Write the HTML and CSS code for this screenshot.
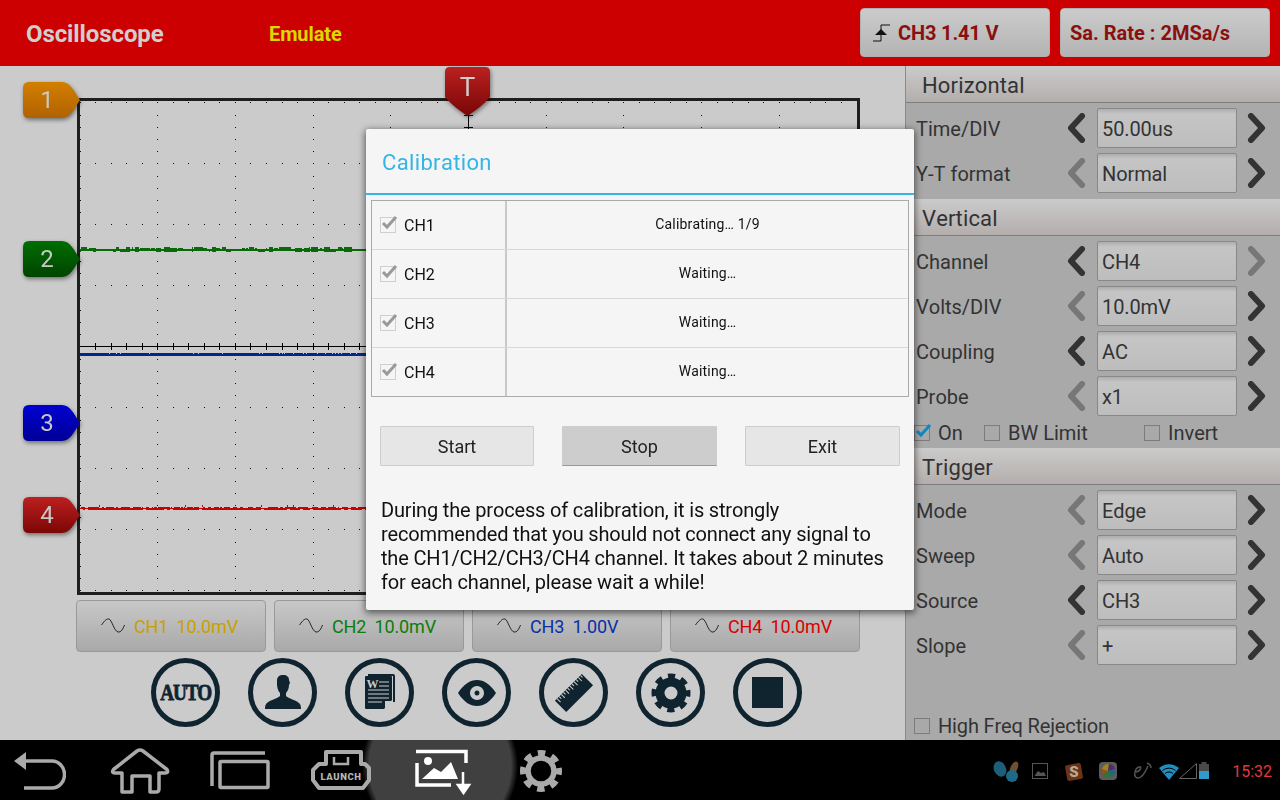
FILE: index.html
```html
<!DOCTYPE html>
<html lang="en">
<head>
<meta charset="utf-8">
<title>Oscilloscope</title>
<link rel="stylesheet" href="styles.css">
</head>
<body>
<div class="app">
  <header class="topbar">
    <div class="app-title">Oscilloscope</div>
    <div class="mode">Emulate</div>
    <div class="top-btn top-btn-trigger">
      <svg class="trig-icon" width="18" height="18" viewBox="0 0 18 18"><path d="M17 1H8V17H0" fill="none" stroke="#111" stroke-width="1"/><path d="M8 5L14 11H2Z" fill="#111"/></svg>
      <span>CH3 1.41 V</span>
    </div>
    <div class="top-btn top-btn-rate"><span>Sa. Rate : 2MSa/s</span></div>
  </header>

  <main class="main">
    <section class="left">
      <div class="scope"><canvas id="scope" class="scope-canvas" width="777" height="491"></canvas></div>

      <div class="marker m1"><div class="marker-body">1</div></div>
      <div class="marker m2"><div class="marker-body">2</div></div>
      <div class="marker m3"><div class="marker-body">3</div></div>
      <div class="marker m4"><div class="marker-body">4</div></div>
      <div class="t-marker"><div class="t-body">T</div></div>

      <div class="ch-row">
        <div class="ch-btn"><svg class="sine" width="24" height="15" viewBox="0 0 24 15"><path d="M0.5 7C4 2 6 0.5 8 1C11 2 13 13 17 14C20 14.5 22 11 23.5 7" fill="none" stroke="#222" stroke-width="1"/></svg><span class="ch1">CH1</span><span class="ch1 ch-val">10.0mV</span></div>
        <div class="ch-btn"><svg class="sine" width="24" height="15" viewBox="0 0 24 15"><path d="M0.5 7C4 2 6 0.5 8 1C11 2 13 13 17 14C20 14.5 22 11 23.5 7" fill="none" stroke="#222" stroke-width="1"/></svg><span class="ch2">CH2</span><span class="ch2 ch-val">10.0mV</span></div>
        <div class="ch-btn"><svg class="sine" width="24" height="15" viewBox="0 0 24 15"><path d="M0.5 7C4 2 6 0.5 8 1C11 2 13 13 17 14C20 14.5 22 11 23.5 7" fill="none" stroke="#222" stroke-width="1"/></svg><span class="ch3">CH3</span><span class="ch3 ch-val">1.00V</span></div>
        <div class="ch-btn"><svg class="sine" width="24" height="15" viewBox="0 0 24 15"><path d="M0.5 7C4 2 6 0.5 8 1C11 2 13 13 17 14C20 14.5 22 11 23.5 7" fill="none" stroke="#222" stroke-width="1"/></svg><span class="ch4">CH4</span><span class="ch4 ch-val">10.0mV</span></div>
      </div>

      <div class="round-row">
        <div class="round"><span class="auto">AUTO</span></div>
        <div class="round">
          <svg width="40" height="40" viewBox="0 0 40 40"><path fill="#102430" d="M14 8C14 3 17 2 20 2C24 2 26 4 26 7L27 10L26 12C26 16 24.500 18 23 20V23C26 26 34 27 37 31C38 33 38 35 38 36H2C2 35 2 33 3 31C6 27 14 26 17 23V20C15 18 14 14 14 11Z"/></svg>
        </div>
        <div class="round">
          <svg width="32" height="38" viewBox="0 0 32 38"><path fill="#102430" d="M4 0H29Q31 0 31 2V28H29V2H4Z"/><path fill="#102430" d="M1 3Q1 2 2 2H27Q28 2 28 3V26L20 35H2Q1 35 1 34Z"/><path fill="#cbcbcb" d="M21 35L28 27H21Z"/><path stroke="#cbcbcb" stroke-width="1.2" d="M15 8H25M15 12H25M4 16H25M4 20H25M4 24H25M4 28H18"/><text x="2.500" y="14" class="doc-w">W</text></svg>
        </div>
        <div class="round">
          <svg width="40" height="28" viewBox="0 0 40 28"><path fill="#102430" fill-rule="evenodd" d="M1 14C7 5 13 1 20 1C27 1 33 5 39 14C33 23 27 27 20 27C13 27 7 23 1 14ZM20 7A7 7 0 1 0 20.010 7ZM20 11.500A2.500 2.500 0 1 1 19.990 11.500Z"/></svg>
        </div>
        <div class="round">
          <svg width="40" height="40" viewBox="0 0 40 40"><g transform="rotate(-45 20 20)"><rect x="1" y="12" width="38" height="16" fill="#102430"/><path stroke="#cbcbcb" stroke-width="1" d="M4 12v5M7 12v3M10 12v5M13 12v3M16 12v5M19 12v3M22 12v5M25 12v3M28 12v5M31 12v3M34 12v5M37 12v3"/></g></svg>
        </div>
        <div class="round">
          <svg width="40" height="40" viewBox="0 0 40 40"><circle cx="20" cy="20" r="11" fill="none" stroke="#102430" stroke-width="9"/><circle cx="20" cy="20" r="16.500" fill="none" stroke="#102430" stroke-width="6" stroke-dasharray="7 5.960" stroke-dashoffset="3.500"/></svg>
        </div>
        <div class="round"><div class="stop-square"></div></div>
      </div>
    </section>

    <aside class="panel">
      <div class="head">Horizontal</div>
      <div class="rows">
        <div class="row"><span class="label">Time/DIV</span><svg class="chev" viewBox="0 0 19 30"><polyline points="15,3 4,15 15,27"/></svg><div class="box">50.00us</div><svg class="chev chev-r" viewBox="0 0 19 30"><polyline points="4,3 15,15 4,27"/></svg></div>
        <div class="row"><span class="label">Y-T format</span><svg class="chev off" viewBox="0 0 19 30"><polyline points="15,3 4,15 15,27"/></svg><div class="box">Normal</div><svg class="chev chev-r" viewBox="0 0 19 30"><polyline points="4,3 15,15 4,27"/></svg></div>
      </div>
      <div class="head">Vertical</div>
      <div class="rows rows-tight">
        <div class="row"><span class="label">Channel</span><svg class="chev" viewBox="0 0 19 30"><polyline points="15,3 4,15 15,27"/></svg><div class="box">CH4</div><svg class="chev chev-r off" viewBox="0 0 19 30"><polyline points="4,3 15,15 4,27"/></svg></div>
        <div class="row"><span class="label">Volts/DIV</span><svg class="chev off" viewBox="0 0 19 30"><polyline points="15,3 4,15 15,27"/></svg><div class="box">10.0mV</div><svg class="chev chev-r" viewBox="0 0 19 30"><polyline points="4,3 15,15 4,27"/></svg></div>
        <div class="row"><span class="label">Coupling</span><svg class="chev" viewBox="0 0 19 30"><polyline points="15,3 4,15 15,27"/></svg><div class="box">AC</div><svg class="chev chev-r" viewBox="0 0 19 30"><polyline points="4,3 15,15 4,27"/></svg></div>
        <div class="row"><span class="label">Probe</span><svg class="chev off" viewBox="0 0 19 30"><polyline points="15,3 4,15 15,27"/></svg><div class="box">x1</div><svg class="chev chev-r" viewBox="0 0 19 30"><polyline points="4,3 15,15 4,27"/></svg></div>
      </div>
      <div class="checks">
        <div class="check check-on"><span class="cb"><svg class="cb-mark" width="18" height="16" viewBox="0 0 18 16"><path d="M3 8L7 12L16 2" fill="none" stroke="#0f8ac0" stroke-width="3"/></svg></span><span>On</span></div>
        <div class="check check-bw"><span class="cb"></span><span>BW Limit</span></div>
        <div class="check check-inv"><span class="cb"></span><span>Invert</span></div>
      </div>
      <div class="head">Trigger</div>
      <div class="rows">
        <div class="row"><span class="label">Mode</span><svg class="chev off" viewBox="0 0 19 30"><polyline points="15,3 4,15 15,27"/></svg><div class="box">Edge</div><svg class="chev chev-r" viewBox="0 0 19 30"><polyline points="4,3 15,15 4,27"/></svg></div>
        <div class="row"><span class="label">Sweep</span><svg class="chev off" viewBox="0 0 19 30"><polyline points="15,3 4,15 15,27"/></svg><div class="box">Auto</div><svg class="chev chev-r" viewBox="0 0 19 30"><polyline points="4,3 15,15 4,27"/></svg></div>
        <div class="row"><span class="label">Source</span><svg class="chev" viewBox="0 0 19 30"><polyline points="15,3 4,15 15,27"/></svg><div class="box">CH3</div><svg class="chev chev-r" viewBox="0 0 19 30"><polyline points="4,3 15,15 4,27"/></svg></div>
        <div class="row"><span class="label">Slope</span><svg class="chev off" viewBox="0 0 19 30"><polyline points="15,3 4,15 15,27"/></svg><div class="box">+</div><svg class="chev chev-r" viewBox="0 0 19 30"><polyline points="4,3 15,15 4,27"/></svg></div>
      </div>
      <div class="check hf"><span class="cb"></span><span>High Freq Rejection</span></div>
    </aside>
  </main>

  <nav class="navbar">
    <div class="spot"></div>
    <svg class="nav-back" width="52" height="38" viewBox="0 0 52 38"><path d="M0 9L12 0V18Z" fill="#aaa"/><path d="M12 9H38A12.500 13.500 0 0 1 38 36H10" fill="none" stroke="#aaa" stroke-width="3.500"/></svg>
    <svg class="nav-home" width="60" height="46" viewBox="0 0 60 46"><path d="M12 44V25H5Q1 25 3.500 21.500L27 3Q30 1 33 3L57 21.500Q59 25 55 25H49V41Q49 44 46 44H40V28H22V44Z" fill="none" stroke="#aaa" stroke-width="3.500" stroke-linejoin="round"/></svg>
    <svg class="nav-recent" width="60" height="40" viewBox="0 0 60 40"><path d="M55 3H4Q2 3 2 5V36" fill="none" stroke="#aaa" stroke-width="3.500"/><rect x="10" y="11.500" width="48" height="26" rx="1" fill="none" stroke="#aaa" stroke-width="3.500"/></svg>
    <svg class="nav-launch" width="60" height="40" viewBox="0 0 60 40"><path d="M15 2H50V14H54L58 18V30L52 38H8L2 30V20L8 14H15Z" fill="none" stroke="#aaa" stroke-width="4" stroke-linejoin="round"/><path d="M23 7V14H37V7" fill="none" stroke="#aaa" stroke-width="2.500"/><text x="30" y="30" text-anchor="middle" class="launch-text">LAUNCH</text></svg>
    <svg class="nav-shot" width="58" height="46" viewBox="0 0 58 46"><path d="M2 14V36H36M1 2.500H51V14" fill="none" stroke="#fff" stroke-width="3.500"/><circle cx="13" cy="12" r="4" fill="#fff"/><path d="M7 30L19 19L26 23L36 13L43 30Z" fill="#fff"/><path d="M48 23V36M43 36H54L48.500 44Z" fill="#fff" stroke="#fff" stroke-width="2.500"/></svg>
    <svg class="nav-gear" width="44" height="46" viewBox="0 0 44 46"><circle cx="22" cy="23" r="13" fill="none" stroke="#aaa" stroke-width="5.500"/><circle cx="22" cy="23" r="18" fill="none" stroke="#aaa" stroke-width="6" stroke-dasharray="7.500 6.640" stroke-dashoffset="3.750"/></svg>
    <div class="tray">
      <svg width="217" height="24" viewBox="0 0 217 24">
        <ellipse cx="7" cy="9" rx="6" ry="8" fill="#1d5f7a" transform="rotate(-25 7 9)"/><ellipse cx="21" cy="8" rx="3.500" ry="7" fill="#6e5230" transform="rotate(25 21 8)"/><circle cx="19" cy="16" r="6" fill="#1d6a88"/>
        <rect x="39.500" y="3.500" width="15" height="15" fill="none" stroke="#555" stroke-width="1"/><path d="M42 15L45 11L48 13L51 12L53 16H42Z" fill="#555"/>
        <rect x="73" y="4" width="16" height="16" rx="2" fill="#6a3418" transform="rotate(-10 81 12)"/><text x="81" y="17" text-anchor="middle" class="tray-s">S</text>
        <rect x="106" y="2" width="18" height="18" rx="4" fill="#5c5c5c"/><path d="M115 11L110 15A7 7 0 0 1 109 9Z" fill="#9a4c1c"/><path d="M115 11L109 9A7 7 0 0 1 116 4Z" fill="#9a861c"/><path d="M115 11L116 4A7 7 0 0 1 122 9Z" fill="#52296c"/><path d="M115 11L122 9A7 7 0 0 1 118 17Z" fill="#246878"/><path d="M115 11L118 17A7 7 0 0 1 110 15Z" fill="#317531"/>
        <path d="M143 12C148 11 149 6 146 7C141 9 140 18 145 18C149 18 152 13 155 6M154 3C157 4 158 6 158 8" fill="none" stroke="#555" stroke-width="1.500"/>
        <path d="M166 8A15 15 0 0 1 186 8L176 20Z" fill="#1f8fbe"/><path d="M169.500 10.500A10 10 0 0 1 182.500 10.500" fill="none" stroke="#000" stroke-width="1"/><path d="M172 13.500A6 6 0 0 1 180 13.500" fill="none" stroke="#000" stroke-width="1"/>
        <path d="M186.500 18.500L203.500 3.500V18.500Z" fill="none" stroke="#666" stroke-width="1"/>
        <rect x="206" y="4" width="10" height="7" fill="#4a4a4a"/><rect x="208.500" y="2" width="5" height="2" fill="#4a4a4a"/><rect x="206" y="11" width="10" height="8" fill="#2f9bc9"/>
      </svg>
      <span class="clock">15:32</span>
    </div>
  </nav>

  <div class="dialog">
    <div class="dlg-title">Calibration</div>
    <div class="cal-table">
      <div class="cal-row"><div class="cal-ch"><span class="cal-cb"><svg width="18" height="16" viewBox="0 0 18 16"><path d="M3 8L7 12L16 2" fill="none" stroke="#999" stroke-width="3"/></svg></span>CH1</div><div class="cal-status">Calibrating… 1/9</div></div>
      <div class="cal-row"><div class="cal-ch"><span class="cal-cb"><svg width="18" height="16" viewBox="0 0 18 16"><path d="M3 8L7 12L16 2" fill="none" stroke="#999" stroke-width="3"/></svg></span>CH2</div><div class="cal-status">Waiting…</div></div>
      <div class="cal-row"><div class="cal-ch"><span class="cal-cb"><svg width="18" height="16" viewBox="0 0 18 16"><path d="M3 8L7 12L16 2" fill="none" stroke="#999" stroke-width="3"/></svg></span>CH3</div><div class="cal-status">Waiting…</div></div>
      <div class="cal-row"><div class="cal-ch"><span class="cal-cb"><svg width="18" height="16" viewBox="0 0 18 16"><path d="M3 8L7 12L16 2" fill="none" stroke="#999" stroke-width="3"/></svg></span>CH4</div><div class="cal-status">Waiting…</div></div>
    </div>
    <div class="dlg-btns">
      <div class="dlg-btn">Start</div>
      <div class="dlg-btn dlg-btn-pressed">Stop</div>
      <div class="dlg-btn">Exit</div>
    </div>
    <p class="dlg-text">During the process of calibration, it is strongly<br>recommended that you should not connect any signal to<br>the CH1/CH2/CH3/CH4 channel. It takes about 2 minutes<br>for each channel, please wait a while!</p>
  </div>
</div>
<script src="script.js"></script>
</body>
</html>
```

FILE: styles.css
```css
* { box-sizing: border-box; }
html, body { margin: 0; padding: 0; }
body { font-family: Roboto, "Liberation Sans", sans-serif; background: #000; font-kerning: none; }
svg { display: block; flex: none; }

.app { position: relative; width: 1280px; height: 800px; overflow: hidden; display: flex; flex-direction: column; }

/* top bar */
.topbar { height: 66px; flex: none; background: #cc0000; display: flex; align-items: center; }
.app-title { margin-left: 26px; width: 243px; padding-top: 2px; font-size: 24px; font-weight: 700; letter-spacing: -.1px; color: #cfcfcf; }
.mode { width: 591px; padding-top: 2px; font-size: 20px; font-weight: 700; letter-spacing: -.1px; color: #d9d900; }
.top-btn { height: 49px; margin-top: -1px; display: flex; align-items: center; border: 1px solid #b0b0b0; border-radius: 4px; background: linear-gradient(#cbcbcb, #b4b4b4); font-size: 20px; font-weight: 700; color: #8a1010; }
.top-btn-trigger { width: 190px; padding-left: 12px; gap: 7px; letter-spacing: -.15px; }
.top-btn-rate { width: 210px; margin-left: 10px; padding-left: 9px; }

.main { flex: 1; min-height: 0; display: flex; }

/* left side */
.left { position: relative; flex: none; width: 905px; background: #cbcbcb; padding: 32px 0 0 76px; }
.scope { margin-left: 1px; width: 783px; height: 497px; border: 3px solid #1e1e1e; }
.scope-canvas { display: block; }

.marker { position: absolute; left: 23px; width: 57px; height: 36px; filter: drop-shadow(1px 2px 2px rgba(0,0,0,.45)); }
.marker-body { width: 57px; height: 36px; clip-path: path("M6 0H39C47 0 51 9 57 18C51 27 47 36 39 36H6Q0 36 0 30V6Q0 0 6 0Z"); padding-right: 9px; display: flex; align-items: center; justify-content: center; font-size: 24px; color: #c8c8c8; }
.m1 { top: 16px; } .m1 .marker-body { background: linear-gradient(#d27f00, #b06200); }
.m2 { top: 175px; } .m2 .marker-body { background: linear-gradient(#006e00, #004400); }
.m3 { top: 339px; } .m3 .marker-body { background: linear-gradient(#0000d2, #000096); }
.m4 { top: 431px; } .m4 .marker-body { background: linear-gradient(#bc2020, #7c0606); }

.t-marker { position: absolute; left: 445px; top: 1px; width: 45px; height: 49px; filter: drop-shadow(1px 2px 2px rgba(0,0,0,.45)); }
.t-body { width: 45px; height: 49px; clip-path: path("M5 0H40Q45 0 45 5V30C38 38 30 44 22.500 49C15 44 7 38 0 30V5Q0 0 5 0Z"); background: linear-gradient(#bc2020, #780606); display: flex; justify-content: center; padding-top: 5px; font-size: 26px; line-height: 30px; color: #cfcfcf; }

.ch-row { display: flex; gap: 8px; margin-top: 5px; }
.ch-btn { width: 190px; height: 52px; display: flex; align-items: center; padding-left: 24px; border: 1px solid #999; border-radius: 4px; background: linear-gradient(#c8c8c8, #a9a9a9); font-size: 18px; letter-spacing: -.1px; }
.sine { margin-right: 9px; margin-top: -2px; }
.ch-val { margin-left: 8px; }
.ch1 { color: #c8a000; } .ch2 { color: #0a7d0a; } .ch3 { color: #0a2fa8; } .ch4 { color: #d80000; }

.round-row { display: flex; gap: 28px; margin: 6px 0 0 75px; }
.round { width: 69px; height: 69px; border: 5px solid #102430; border-radius: 50%; display: flex; align-items: center; justify-content: center; }
.auto { font-family: "Liberation Serif", serif; font-weight: 700; font-size: 24px; letter-spacing: -1.500px; color: #102430; transform: scaleX(.8); -webkit-text-stroke: .8px #102430; }
.doc-w { font-family: "Liberation Serif", serif; font-weight: 700; font-size: 12px; fill: #cbcbcb; }
.stop-square { width: 31px; height: 31px; background: #102430; }

/* right panel */
.panel { flex: 1; border-left: 1px solid #8a8a8a; background: #a9a9a9; display: flex; flex-direction: column; color: #333; }
.head { height: 37px; flex: none; padding: 3px 0 0 16px; border-bottom: 1px solid #7d7d7d; background: linear-gradient(#cbcbcb, #b3aeac); font-size: 22px; line-height: 33px; letter-spacing: .15px; }
.rows { display: flex; flex-direction: column; gap: 5px; padding: 5px 0 6px; }
.rows-tight { padding-bottom: 0; }
.row { height: 40px; display: flex; align-items: center; padding-left: 10px; font-size: 20px; }
.label { flex: none; width: 151px; padding-top: 2px; }
.chev { width: 19px; height: 30px; margin-right: 11px; }
.chev-r { margin: 0 0 0 10px; }
.chev polyline { fill: none; stroke: #333; stroke-width: 6; stroke-linecap: round; stroke-linejoin: round; }
.chev.off polyline { stroke: #777; }
.box { flex: none; width: 140px; height: 40px; padding: 2px 0 0 4px; line-height: 36px; letter-spacing: -.1px; border: 1px solid #888; border-radius: 2px; background: linear-gradient(#adadad 0, #c5c5c5 5px, #bdbdbd 100%); }

.checks { position: relative; height: 32px; flex: none; }
.check { display: flex; align-items: center; gap: 8px; font-size: 20px; }
.check-on, .check-bw, .check-inv { position: absolute; top: 1px; height: 32px; }
.check-on { left: 8px; }
.check-bw { left: 78px; }
.check-inv { left: 238px; }
.cb { position: relative; width: 16px; height: 16px; flex: none; border: 1px solid #7c7c7c; }
.cb-mark { position: absolute; left: -1px; top: -3px; }
.hf { height: 28px; margin: auto 0 0 8px; letter-spacing: -.15px; }

/* navigation bar */
.navbar { position: relative; height: 60px; flex: none; background: #000; display: flex; align-items: center; overflow: hidden; padding-left: 14px; }
.spot { position: absolute; left: 362px; top: -52px; width: 156px; height: 156px; border-radius: 50%; background: radial-gradient(circle closest-side, #404040 91%, rgba(64,64,64,0) 100%); }
.navbar > svg { position: relative; }
.nav-back { margin-top: 2px; }
.nav-home { margin-left: 44px; margin-top: 1px; }
.nav-recent { margin-left: 40px; }
.nav-launch { margin-left: 41px; }
.nav-shot { margin-left: 44px; margin-top: 4px; }
.nav-gear { margin-left: 46px; margin-top: 1px; }
.launch-text { font-family: Roboto, sans-serif; font-weight: 900; font-size: 9.500px; letter-spacing: .6px; fill: #b4b4b4; }
.tray { display: flex; align-items: center; margin-left: auto; padding-right: 8px; }
.tray svg { margin-top: 3px; }
.tray-s { font-family: Roboto, sans-serif; font-weight: 900; font-size: 15px; fill: #b8a898; }
.clock { margin-left: 22px; font-size: 16px; color: #e23a3a; margin-top: 2px; }

/* dialog */
.dialog { position: absolute; left: 366px; top: 129px; width: 548px; height: 481px; background: #f5f5f5; border-radius: 2px; box-shadow: 0 2px 7px 1px rgba(0,0,0,.55); color: #111; }
.dlg-title { height: 66px; padding: 1px 0 0 16px; border-bottom: 2px solid #33b5e5; font-size: 22px; line-height: 65px; letter-spacing: .35px; color: #33b5e5; }
.cal-table { margin: 5px 5px 0; height: 197px; border: 1px solid #aaa; }
.cal-row { height: 49px; display: flex; border-bottom: 1px solid #d8d8d8; }
.cal-row:last-child { border-bottom: 0; height: 48px; }
.cal-ch { width: 135px; flex: none; display: flex; align-items: center; padding-left: 8px; font-size: 16px; border-right: 2px solid #c8c8c8; }
.cal-cb { position: relative; width: 16px; height: 16px; margin-right: 8px; border: 1px solid #cfcfcf; }
.cal-cb svg { position: absolute; left: -1px; top: -3px; }
.cal-status { flex: 1; text-align: center; font-size: 14px; line-height: 47px; letter-spacing: .17px; }
.dlg-btns { display: flex; gap: 28px; margin: 29px 14px 0; }
.dlg-btn { width: 155px; height: 40px; text-align: center; line-height: 39px; font-size: 18px; color: #222; background: #e6e6e6; border: 1px solid #cdcdcd; border-radius: 1px; }
.dlg-btn:first-child { width: 154px; }
.dlg-btn-pressed { background: #cdcdcd; border: 0; border-bottom: 1px solid #999; line-height: 41px; }
.dlg-text { margin: 32px 0 0 15px; font-size: 20px; line-height: 24px; letter-spacing: -.17px; color: #111; white-space: nowrap; }
```

FILE: script.js
```js
(function () {
  var c = document.getElementById('scope').getContext('2d');
  var W = 777, H = 491, OX = 80, OY = 101;
  var seed = 7;
  function r() { seed = (seed * 16807) % 2147483647; return seed / 2147483647; }
  function px(x, y, w, h, col) { c.fillStyle = col; c.fillRect(x - OX, y - OY, w, h); }

  var cols = [], rows = [], i, j;
  for (i = 0; i <= 10; i++) cols.push(Math.floor(OX + 77.7 * i));
  for (i = 0; i <= 8; i++) rows.push(102 + 61 * i);

  // dotted grid
  for (j = 0; j < rows.length; j++)
    for (i = 0; i <= 50; i++) px(Math.floor(OX + 15.54 * i), rows[j], 1, 1, '#111');
  for (i = 0; i < cols.length; i++)
    for (j = 0; j <= 40; j++) px(cols[i], Math.round(102.4 + 12.2 * j), 1, 1, '#111');

  // centre axes with ticks
  px(OX, 346, W, 1, '#000');
  for (i = 1; i <= 50; i++) px(Math.floor(OX + 15.54 * i), 343, 1, 7, '#000');
  px(468, OY, 1, H, '#000');
  for (j = 0; j <= 40; j++) px(464, Math.round(102.4 + 12.2 * j), 9, 1, '#000');

  // channel 2 (green): solid base with noise above it
  var col = '#0a6a0a', x, run;
  px(OX, 249, W, 2, col);
  for (x = OX; x < OX + W; ) {
    run = 1 + Math.floor(r() * 7);
    if (r() < .75) px(x, 247 + Math.floor(r() * 2), run, 2, col);
    if (r() < .4) px(x, 251, run, 1, col);
    x += run + Math.floor(r() * 3);
  }
  // channel 3 (blue): flat line with occasional notches
  px(OX, 353, W, 3, '#00288c');
  var notches = [109, 116, 120, 149, 193, 198, 222, 259, 262, 279, 282, 284, 293, 303, 306, 317, 325, 332, 335, 338, 341, 350, 356];
  for (i = 0; i < notches.length; i++) px(notches[i], 353, 1, 1, '#cbcbcb');
  // channel 4 (red): line with notches and spikes
  px(OX, 507, W, 3, '#cc0000');
  for (x = OX; x < OX + W; x += 2 + Math.floor(r() * 7)) {
    if (r() < .7) px(x, 507, 1 + Math.floor(r() * 3), 1, '#cbcbcb');
    if (r() < .12) px(x, 509, 3, 1, '#cbcbcb');
    if (r() < .1) px(x, 505, 1, 2, '#cc0000');
  }
})();
```
